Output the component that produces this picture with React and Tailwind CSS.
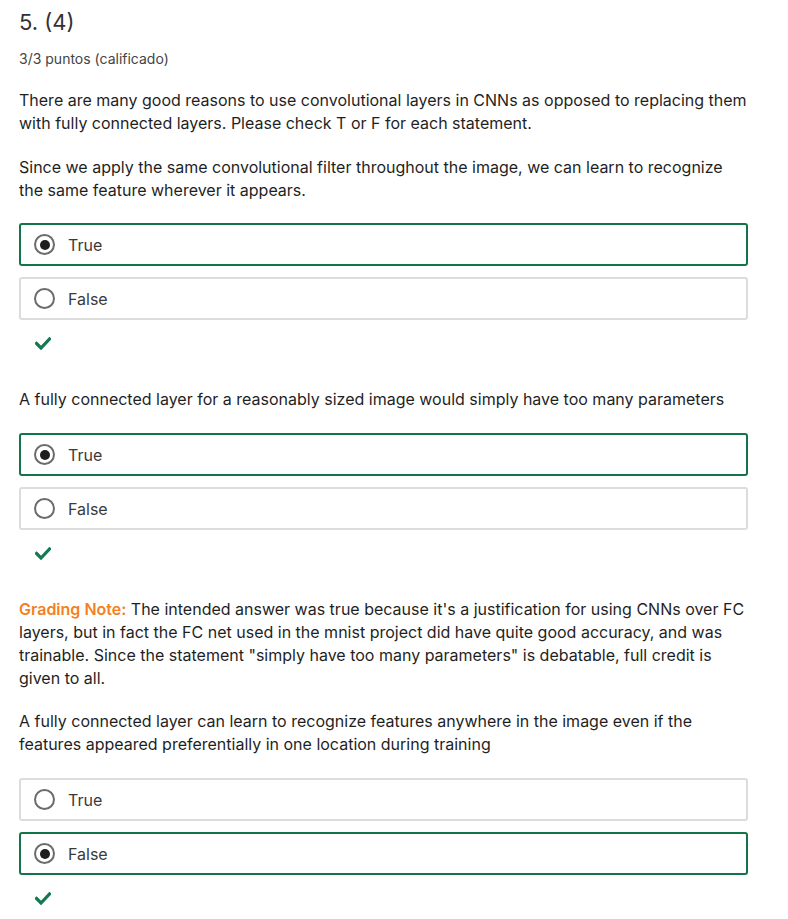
const Check = () => (
  <svg width="16" height="13" viewBox="0 0 16 13" className="ml-[16px]">
    <path d="M1.5 6.5 L6 11 L14.5 2" fill="none" stroke="#137a4f" strokeWidth="3.2" strokeLinecap="square" />
  </svg>
)

const Option = ({ label, selected }) => (
  <div
    className={`flex h-[43px] w-[729px] items-center rounded-[3px] border-2 ${
      selected ? 'border-[#137547]' : 'border-[#dcdcdc]'
    }`}
  >
    <span className="ml-[13px] flex h-[21px] w-[21px] items-center justify-center rounded-full border-2 border-[#6b6b6b]">
      {selected && <span className="h-[10px] w-[10px] rounded-full bg-[#1f1f1f]" />}
    </span>
    <span className="ml-[13px] text-[16px] text-[#3a3a3a]">{label}</span>
  </div>
)

const Options = ({ answer, mt }) => (
  <div className={`flex flex-col gap-[11px] ${mt}`}>
    <Option label="True" selected={answer === 'True'} />
    <Option label="False" selected={answer === 'False'} />
  </div>
)

export default function App() {
  return (
    <div
      className="w-[788px] bg-white pl-[19px] pt-[8px] pb-10 text-[#1f1f1f]"
      style={{ fontFamily: 'Inter, "Noto Sans", sans-serif' }}
    >
      <h2 className="text-[22px] leading-[28px] text-[#333]">5. (4)</h2>
      <p className="mt-[13px] text-[14px] leading-[20px] text-[#444]">3/3 puntos (calificado)</p>

      <p className="mt-[20px] w-[752px] text-[16px] leading-[23px]">
        There are many good reasons to use convolutional layers in CNNs as opposed to replacing them with fully connected
        layers. Please check T or F for each statement.
      </p>
      <p className="mt-[21px] w-[730px] text-[16px] leading-[23px]">
        Since we apply the same convolutional filter throughout the image, we can learn to recognize the same feature
        wherever it appears.
      </p>
      <Options answer="True" mt="mt-[21px]" />
      <div className="mt-[17px] h-[13px]">
        <Check />
      </div>

      <p className="mt-[38px] text-[16px] leading-[23px]">
        A fully connected layer for a reasonably sized image would simply have too many parameters
      </p>
      <Options answer="True" mt="mt-[22px]" />
      <div className="mt-[17px] h-[13px]">
        <Check />
      </div>

      <p className="mt-[38px] w-[730px] text-[16px] leading-[23px]">
        <span className="font-semibold text-[#f57f22]">Grading Note:</span> The intended answer was true because it's a
        justification for using CNNs over FC layers, but in fact the FC net used in the mnist project did have quite good
        accuracy, and was trainable. Since the statement "simply have too many parameters" is debatable, full credit is
        given to all.
      </p>
      <p className="mt-[20px] w-[730px] text-[16px] leading-[23px]">
        A fully connected layer can learn to recognize features anywhere in the image even if the features appeared
        preferentially in one location during training
      </p>
      <Options answer="False" mt="mt-[22px]" />
      <div className="mt-[17px] h-[13px]">
        <Check />
      </div>
    </div>
  )
}
